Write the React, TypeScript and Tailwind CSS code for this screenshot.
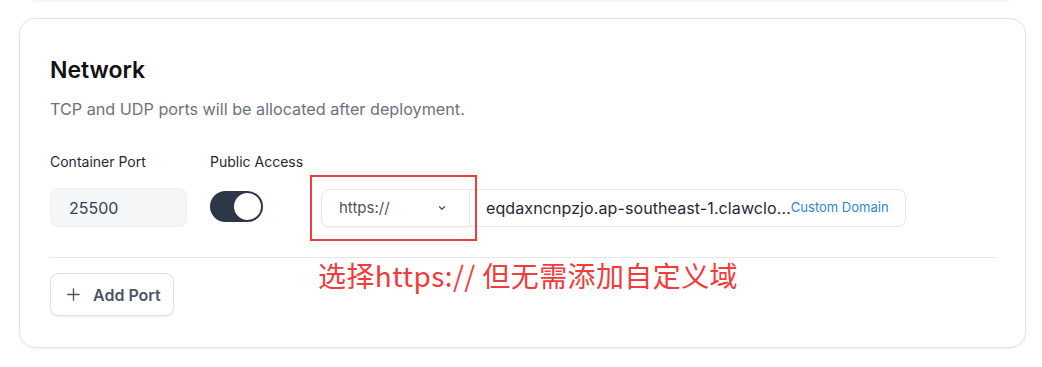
import React from "react";

export default function App() {
  return (
    <div
      className="w-[1042px] h-[367px] bg-white overflow-hidden relative"
      style={{ fontFamily: "Inter, 'Noto Sans', 'Noto Sans CJK SC', sans-serif" }}
    >
      <div className="mx-[33px] h-[2px] bg-[#f6f6f7]" />
      <div className="pl-[19px] pr-[16px] pt-[16px]">
        <div className="rounded-[16px] border border-[#e4e4e7] bg-white shadow-[0_1px_3px_rgba(0,0,0,0.06)] pl-[30px] pr-[30px] pt-[36px] pb-[31px] relative">
          <h2 className="text-[23px] leading-[30px] font-semibold text-[#111111]">Network</h2>
          <p className="mt-[12px] text-[16.2px] leading-[24px] text-[#6b7280]">
            TCP and UDP ports will be allocated after deployment.
          </p>

          <div className="mt-[31px] flex gap-[23px]">
            <div className="w-[137px] flex flex-col">
              <div className="text-[14px] leading-[20px] text-[#1f2937]">Container Port</div>
              <div className="mt-[16px] h-[39px] rounded-[8px] bg-[#f5f6f8] border border-[#eef0f3] flex items-center pl-[18px] text-[16px] text-[#374151]">
                25500
              </div>
            </div>
            <div className="w-[88px] flex flex-col">
              <div className="text-[14px] leading-[20px] text-[#1f2937] whitespace-nowrap">Public Access</div>
              <div className="mt-[19px] w-[53px] h-[31px] rounded-full bg-[#2d3748] flex items-center justify-end pr-[2px]">
                <div className="w-[27px] h-[27px] rounded-full bg-white" />
              </div>
            </div>
            <div className="flex flex-col">
              <div className="h-[20px]" />
              <div className="mt-[17px] flex">
                <div className="relative">
                  <div className="w-[149px] h-[38px] rounded-l-[8px] border border-[#e5e7eb] bg-white shadow-[0_1px_2px_rgba(0,0,0,0.06)] flex items-center justify-between pl-[17px] pr-[22px]">
                    <span className="text-[15px] text-[#4b5563]">https://</span>
                    <svg width="10" height="10" viewBox="0 0 24 24" fill="none" stroke="#4b5563" strokeWidth="3" strokeLinecap="round" strokeLinejoin="round">
                      <path d="M6 9l6 6 6-6" />
                    </svg>
                  </div>
                  <div className="absolute left-[-11px] top-[-14px] w-[167px] h-[66px] border-2 border-[#f23b3b] pointer-events-none" />
                </div>
                <div className="w-[436px] h-[38px] rounded-r-[8px] border border-l-0 border-[#e5e7eb] bg-white flex items-center pl-[16px] pr-[16px]">
                  <span className="text-[16px] text-[#1f2937] whitespace-nowrap tracking-[0.1px]">
                    eqdaxncnpzjo.ap-southeast-1.clawclo...
                  </span>
                  <span className="text-[13px] text-[#2b87d9] whitespace-nowrap">Custom Domain</span>
                </div>
              </div>
            </div>
          </div>

          <div className="mt-[30px] h-px bg-[#e5e7eb]" />

          <button className="mt-[15px] h-[43px] w-[124px] rounded-[8px] border border-[#dfe1e8] bg-white shadow-[0_1px_2px_rgba(0,0,0,0.08)] flex items-center pl-[15px] gap-[12px] text-[16px] font-semibold text-[#4b5563]">
            <svg width="15" height="15" viewBox="0 0 24 24" fill="none" stroke="#4b5563" strokeWidth="2.2" strokeLinecap="round">
              <path d="M12 3v18M3 12h18" />
            </svg>
            Add Port
          </button>

          <div
            className="absolute left-[298px] top-[238px] text-[28px] leading-[36px] tracking-[0.4px] text-[#f23b3b] whitespace-nowrap"
            style={{ fontFamily: "'Noto Sans CJK SC', sans-serif" }}
          >
            选择https:// 但无需添加自定义域
          </div>
        </div>
      </div>
    </div>
  );
}
